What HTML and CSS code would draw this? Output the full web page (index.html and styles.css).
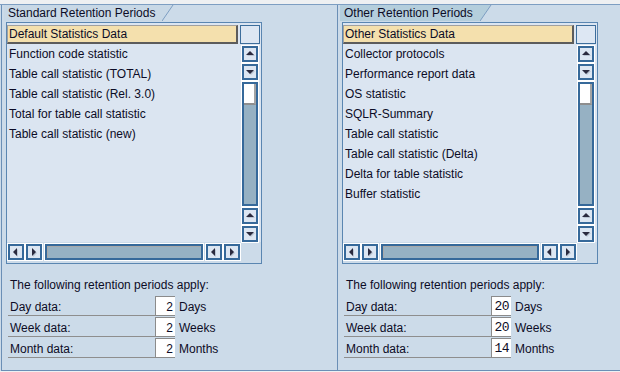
FILE: index.html
```html
<!DOCTYPE html>
<html lang="en">
<head>
    <meta charset="UTF-8">
    <meta name="viewport" content="width=device-width, initial-scale=1.0">
    <title>Retention Periods</title>
    <link rel="stylesheet" href="styles.css">
</head>
<body>
    <div class="workspace">
        <section class="panel">
            <div class="tab">
                <span class="tab-label">Standard Retention Periods</span>
                <svg class="tab-edge" width="12" height="16" viewBox="0 0 12 16"><polygon points="0,0 11,0 0,16" fill="#c8d8e6"/><line x1="0" y1="16" x2="11" y2="0" stroke="#7d9ec2" stroke-width="1"/></svg>
            </div>
            <div class="listbox">
                <div class="list-body">
                    <ul class="items">
                        <li class="selected">Default Statistics Data</li>
                        <li>Function code statistic</li>
                        <li>Table call statistic (TOTAL)</li>
                        <li>Table call statistic (Rel. 3.0)</li>
                        <li>Total for table call statistic</li>
                        <li>Table call statistic (new)</li>
                    </ul>
                    <div class="vscroll">
                        <div class="vs-head"></div>
                        <div class="sb-btn up"></div>
                        <div class="sb-btn down"></div>
                        <div class="vs-track"><div class="vs-thumb"></div></div>
                        <div class="sb-btn up"></div>
                        <div class="sb-btn down"></div>
                    </div>
                </div>
                <div class="hscroll">
                    <div class="sb-btn left"></div>
                    <div class="sb-btn right"></div>
                    <div class="hs-track"></div>
                    <div class="sb-btn left"></div>
                    <div class="sb-btn right"></div>
                </div>
            </div>
            <div class="periods">
                <p class="periods-title">The following retention periods apply:</p>
                <div class="period-row"><span class="period-label">Day data:</span><span class="period-value">2</span><span class="period-unit">Days</span></div>
                <div class="period-row"><span class="period-label">Week data:</span><span class="period-value">2</span><span class="period-unit">Weeks</span></div>
                <div class="period-row"><span class="period-label">Month data:</span><span class="period-value">2</span><span class="period-unit">Months</span></div>
            </div>
        </section>

        <section class="panel">
            <div class="tab tab-other">
                <span class="tab-label">Other Retention Periods</span>
                <svg class="tab-edge" width="12" height="16" viewBox="0 0 12 16"><polygon points="0,0 11,0 0,16" fill="#b4cedc"/><line x1="0" y1="16" x2="11" y2="0" stroke="#7d9ec2" stroke-width="1"/></svg>
            </div>
            <div class="listbox">
                <div class="list-body">
                    <ul class="items">
                        <li class="selected">Other Statistics Data</li>
                        <li>Collector protocols</li>
                        <li>Performance report data</li>
                        <li>OS statistic</li>
                        <li>SQLR-Summary</li>
                        <li>Table call statistic</li>
                        <li>Table call statistic (Delta)</li>
                        <li>Delta for table statistic</li>
                        <li>Buffer statistic</li>
                    </ul>
                    <div class="vscroll">
                        <div class="vs-head"></div>
                        <div class="sb-btn up"></div>
                        <div class="sb-btn down"></div>
                        <div class="vs-track"><div class="vs-thumb"></div></div>
                        <div class="sb-btn up"></div>
                        <div class="sb-btn down"></div>
                    </div>
                </div>
                <div class="hscroll">
                    <div class="sb-btn left"></div>
                    <div class="sb-btn right"></div>
                    <div class="hs-track"></div>
                    <div class="sb-btn left"></div>
                    <div class="sb-btn right"></div>
                </div>
            </div>
            <div class="periods">
                <p class="periods-title">The following retention periods apply:</p>
                <div class="period-row"><span class="period-label">Day data:</span><span class="period-value mono">20</span><span class="period-unit">Days</span></div>
                <div class="period-row"><span class="period-label">Week data:</span><span class="period-value mono">20</span><span class="period-unit">Weeks</span></div>
                <div class="period-row"><span class="period-label">Month data:</span><span class="period-value mono">14</span><span class="period-unit">Months</span></div>
            </div>
        </section>
    </div>
</body>
</html>
```

FILE: styles.css
```css
* {
    box-sizing: border-box;
}
body {
    margin: 0;
    background: #eef0f2;
    font-family: "Liberation Sans", Arial, sans-serif;
    font-size: 12px;
    color: #0c0c26;
}
.workspace {
    display: flex;
    height: 367px;
    margin-top: 4px;
    border-top: 1px solid #7d9ec2;
    background: #ccdbe9;
    overflow: hidden;
}
.panel {
    flex: none;
    width: 336px;
    height: 366px;
    border-left: 1px solid #6b8fb6;
    border-bottom: 1px solid #6b8fb6;
}
.panel:first-child {
    margin-left: 1px;
}

/* tab header */
.tab {
    display: flex;
    height: 16px;
    margin-left: 2px;
}
.tab-label {
    background: #c8d8e6;
    padding: 0 7px 0 4px;
    line-height: 16px;
    white-space: nowrap;
}
.tab-other .tab-label {
    background: #b4cedc;
}
.tab-edge {
    display: block;
}

/* list box */
.listbox {
    width: 256px;
    height: 242px;
    margin: 1px 0 0 4px;
    border: 1px solid #5a86b1;
    background: #ccdbe9;
}
.list-body {
    display: flex;
    height: 219px;
    background: #dbe5f1;
}
.items {
    list-style: none;
    margin: 0;
    padding: 1px 0 0;
    width: 233px;
}
.items li {
    height: 20px;
    padding: 1px 0 0 2px;
    line-height: 19px;
    white-space: nowrap;
}
.items li.selected {
    width: 231px;
    height: 19px;
    margin: 1px 0 0;
    padding: 1px 0 0 1px;
    line-height: 15px;
    background: #f4e0ad;
    border: 1px solid #a0a0a0;
    border-right: 2px solid #5c5c5c;
    border-bottom: 2px solid #5c5c5c;
}

/* scrollbars */
.vscroll {
    width: 21px;
    padding: 2px 1px 0 0;
    display: flex;
    flex-direction: column;
    align-items: center;
    gap: 2px;
}
.vs-head {
    width: 20px;
    height: 19px;
    border: 1px solid #3d6e9c;
    background: #dde7f3;
}
.sb-btn {
    flex: none;
    position: relative;
    width: 16px;
    height: 16px;
    border: 2px solid #36699a;
    background: #dce6f2;
    box-shadow: 0 0 0 1px #fff;
}
.sb-btn::before,
.sb-btn::after {
    content: "";
    position: absolute;
    width: 0;
    height: 0;
}
.sb-btn::before {
    z-index: 1;
}
.sb-btn.up::before,
.sb-btn.up::after {
    left: 2px;
    top: 3px;
    border-left: 4px solid transparent;
    border-right: 4px solid transparent;
    border-bottom: 4px solid #2a2a3e;
}
.sb-btn.up::after {
    top: 4px;
    left: 3px;
    border-bottom-color: #b9c4d2;
}
.sb-btn.down::before,
.sb-btn.down::after {
    left: 2px;
    top: 4px;
    border-left: 4px solid transparent;
    border-right: 4px solid transparent;
    border-top: 4px solid #2a2a3e;
}
.sb-btn.down::after {
    top: 5px;
    left: 3px;
    border-top-color: #b9c4d2;
}
.sb-btn.left::before,
.sb-btn.left::after {
    left: 3px;
    top: 2px;
    border-top: 4px solid transparent;
    border-bottom: 4px solid transparent;
    border-right: 4px solid #2a2a3e;
}
.sb-btn.left::after {
    left: 4px;
    top: 3px;
    border-right-color: #b9c4d2;
}
.sb-btn.right::before,
.sb-btn.right::after {
    left: 4px;
    top: 2px;
    border-top: 4px solid transparent;
    border-bottom: 4px solid transparent;
    border-left: 4px solid #2a2a3e;
}
.sb-btn.right::after {
    left: 5px;
    top: 3px;
    border-left-color: #b9c4d2;
}
.vs-track {
    flex: none;
    width: 16px;
    height: 124px;
    border: 2px solid #36699a;
    background: #96b1c3;
    box-shadow: 0 0 0 1px #fff;
}
.vs-thumb {
    height: 21px;
    background: #fff;
    border-right: 2px solid #a4a4a4;
    border-bottom: 2px solid #8e8e8e;
}
.hscroll {
    display: flex;
    height: 21px;
    padding: 2px 0 0 1px;
    gap: 2px;
}
.hs-track {
    width: 158px;
    height: 16px;
    margin: 0 1px;
    border: 2px solid #36699a;
    background: #96b1c3;
    box-shadow: 0 0 0 1px #fff, inset 1px 1px 0 #a9a9a9;
}

/* retention periods */
.periods {
    padding: 13px 0 0 6px;
}
.periods-title {
    margin: 0 0 3px 2px;
    line-height: 16px;
}
.period-row {
    display: flex;
    height: 21px;
}
.period-label {
    width: 147px;
    height: 20px;
    padding: 3px 0 0 2px;
    line-height: 16px;
    border-bottom: 1px solid #8e8e8e;
}
.period-value {
    width: 20px;
    height: 20px;
    padding: 2px 2px 0 0;
    line-height: 16px;
    text-align: right;
    background: #fff;
    border: 1px solid #8b8b8b;
    border-right: none;
}
.period-value.mono {
    font-family: "Liberation Mono", "DejaVu Sans Mono", monospace;
    font-size: 13px;
    letter-spacing: -0.5px;
}
.period-unit {
    padding: 3px 0 0 4px;
    line-height: 16px;
}
```
